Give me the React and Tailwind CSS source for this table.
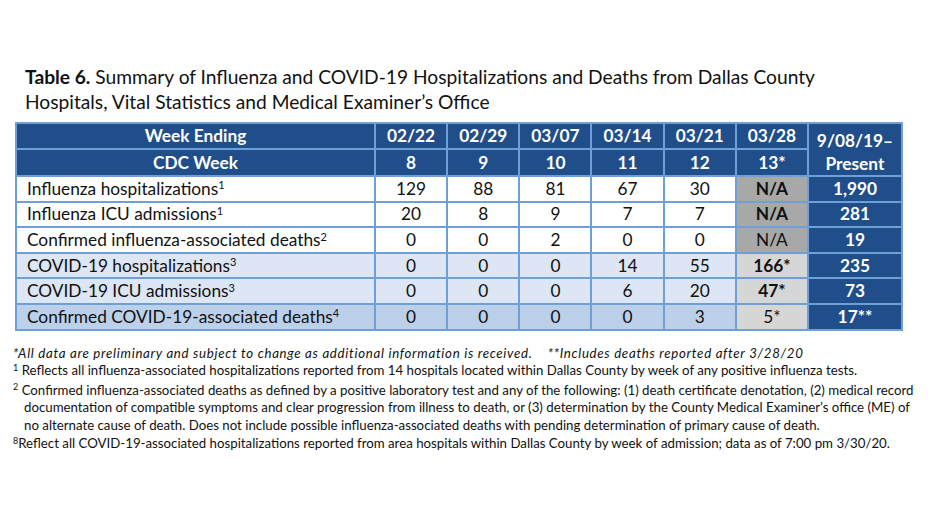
import React from "react"

const weeks = ["02/22", "02/29", "03/07", "03/14", "03/21", "03/28"]
const cdc = ["8", "9", "10", "11", "12", "13*"]

const rows = [
  { label: "Influenza hospitalizations", sup: "1", vals: ["129", "88", "81", "67", "30"], last: { text: "N/A", kind: "na", bold: true }, total: "1,990", bg: "bg-white" },
  { label: "Influenza ICU admissions", sup: "1", vals: ["20", "8", "9", "7", "7"], last: { text: "N/A", kind: "na", bold: true }, total: "281", bg: "bg-white" },
  { label: "Confirmed influenza-associated deaths", sup: "2", vals: ["0", "0", "2", "0", "0"], last: { text: "N/A", kind: "na", bold: false }, total: "19", bg: "bg-white" },
  { label: "COVID-19 hospitalizations", sup: "3", vals: ["0", "0", "0", "14", "55"], last: { text: "166*", kind: "lt", bold: true }, total: "235", bg: "bg-[#dce6f4]" },
  { label: "COVID-19 ICU admissions", sup: "3", vals: ["0", "0", "0", "6", "20"], last: { text: "47*", kind: "lt", bold: true }, total: "73", bg: "bg-[#dce6f4]" },
  { label: "Confirmed COVID-19-associated deaths", sup: "4", vals: ["0", "0", "0", "0", "3"], last: { text: "5*", kind: "lt", bold: false }, total: "17**", bg: "bg-[#bcd0ea]" },
]

export default function App() {
  return (
    <div className="w-[932px] h-[524px] bg-white text-[#111] overflow-hidden" style={{ fontFamily: "Lato, 'Open Sans', sans-serif" }}>
      {/* title */}
      <div className="pt-[64px] pl-[25px] text-[19.2px] leading-[25px]">
        <p><span className="font-bold">Table 6.</span> Summary of Influenza and COVID-19 Hospitalizations and Deaths from Dallas County</p>
        <p>Hospitals, Vital Statistics and Medical Examiner’s Office</p>
      </div>

      {/* table */}
      <div className="mt-[8px] ml-[15px] w-[888px] bg-[#6e9fd6] p-[2px] grid grid-cols-[357px_repeat(6,1fr)_92px] gap-[2px] text-[17.3px]">
        <div className="h-[24px] bg-[#1f4e8a] text-white font-bold flex items-center justify-center">Week Ending</div>
        {weeks.map((w) => (
          <div key={w} className="h-[24px] bg-[#1f4e8a] text-white font-bold flex items-center justify-center">{w}</div>
        ))}
        <div className="row-span-2 bg-[#1f4e8a] text-white font-bold flex flex-col items-center justify-center leading-[23px] pt-[4px]">
          <span>9/08/19–</span>
          <span>Present</span>
        </div>
        <div className="h-[25px] bg-[#1f4e8a] text-white font-bold flex items-center justify-center">CDC Week</div>
        {cdc.map((c) => (
          <div key={c} className="h-[25px] bg-[#1f4e8a] text-white font-bold flex items-center justify-center">{c}</div>
        ))}

        {rows.map((r) => (
          <React.Fragment key={r.label}>
            <div className={`h-[23.6px] ${r.bg} pl-[10px] flex items-center`}>
              <span>{r.label}<sup className="text-[11px]">{r.sup}</sup></span>
            </div>
            {r.vals.map((v, i) => (
              <div key={i} className={`h-[23.6px] ${r.bg} flex items-center justify-center`}>{v}</div>
            ))}
            <div className={`h-[23.6px] flex items-center justify-center ${r.last.kind === "na" ? "bg-[#a8a8a8]" : "bg-[#d6d6d6]"} ${r.last.bold ? "font-bold" : ""}`}>
              {r.last.text}
            </div>
            <div className="h-[23.6px] bg-[#1f4e8a] text-white font-bold flex items-center justify-center">{r.total}</div>
          </React.Fragment>
        ))}
      </div>

      {/* footnotes */}
      <div className="mt-[14px] pl-[13px] text-[13.25px] leading-[17.5px] whitespace-nowrap">
        <p className="italic tracking-[0.7px]">*All data are preliminary and subject to change as additional information is received. &nbsp;&nbsp;&nbsp;**Includes deaths reported after 3/28/20</p>
        <p><sup className="text-[9px]">1</sup> Reflects all influenza-associated hospitalizations reported from 14 hospitals located within Dallas County by week of any positive influenza tests.</p>
        <p className="mt-[2px]">
          <sup className="text-[9px]">2</sup> Confirmed influenza-associated deaths as defined by a positive laboratory test and any of the following: (1) death certificate denotation, (2) medical record
        </p>
        <p className="pl-[11px]">documentation of compatible symptoms and clear progression from illness to death, or (3) determination by the County Medical Examiner’s office (ME) of</p>
        <p className="pl-[11px]">no alternate cause of death. Does not include possible influenza-associated deaths with pending determination of primary cause of death.</p>
        <p className="mt-[1px]"><sup className="text-[9px]">8</sup>Reflect all COVID-19-associated hospitalizations reported from area hospitals within Dallas County by week of admission; data as of 7:00 pm 3/30/20.</p>
      </div>
    </div>
  )
}
